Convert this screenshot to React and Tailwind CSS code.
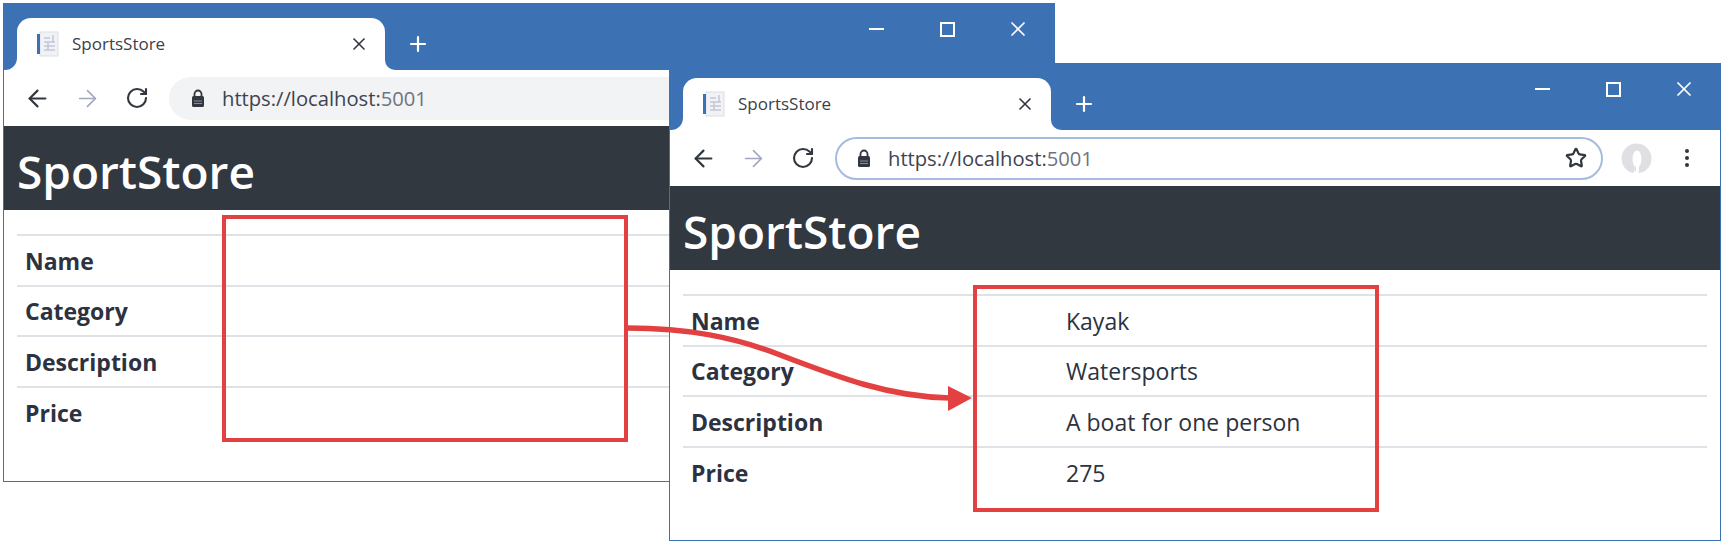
import { ArrowLeft, ArrowRight, RotateCw, Star, X, Plus } from "lucide-react";

const rows = [
  { name: "Name", value: "Kayak" },
  { name: "Category", value: "Watersports" },
  { name: "Description", value: "A boat for one person" },
  { name: "Price", value: "275" },
];

function Favicon() {
  return (
    <svg width="24" height="26" viewBox="0 0 24 26" className="shrink-0">
      <rect x="4" y="1" width="18" height="24" fill="#f1f2f6" stroke="#dcdde6" />
      <rect x="1" y="3" width="3" height="20" fill="#3c72b3" />
      <path d="M8 7h6M8 11h11M8 15h11M8 19h11M12 11v8M17 4v7" stroke="#c3c6d6" strokeWidth="1.5" fill="none" />
    </svg>
  );
}

function LockIcon() {
  return (
    <svg width="14" height="18" viewBox="0 0 14 18" className="shrink-0">
      <path d="M3.5 8V5a3.5 3.5 0 0 1 7 0v3" fill="none" stroke="#32373f" strokeWidth="1.8" />
      <rect x="1" y="7" width="12" height="11" rx="1.5" fill="#32373f" />
      <path d="M3 12h8M3 14.5h8" stroke="#8a8e96" strokeWidth="1" />
    </svg>
  );
}

function Avatar() {
  return (
    <svg width="31" height="31" viewBox="0 0 31 31" className="shrink-0">
      <circle cx="15.500" cy="15.500" r="15" fill="#dfdfe4" />
      <ellipse cx="16" cy="16" rx="4.500" ry="8.500" fill="#ffffff" />
      <path d="M14 22l-1.500 9h5l.5-9z" fill="#ffffff" />
      <path d="M12 26l3-3v6z" fill="#dfdfe4" />
    </svg>
  );
}

function WindowControls() {
  return (
    <div className="flex items-center">
      <div className="w-[15px] h-[2px] bg-white mr-[56px]" />
      <div className="w-[15px] h-[15px] border-2 border-white mr-[51px]" />
      <X size={24} strokeWidth={1.7} color="#ffffff" className="-my-[4px] mr-[24px]" />
    </div>
  );
}

function BrowserWindow({ className, focused, showValues }) {
  return (
    <div className={`absolute flex flex-col border border-[#3c72b3] bg-white ${className}`}>
      {/* tab strip */}
      <div className="flex items-end justify-between h-[66px] bg-[#3c72b3] shrink-0">
        <div className="flex items-center">
          <div className="relative flex items-center h-[52px] w-[368px] ml-[13px] pl-[19px] pr-[16px] bg-white rounded-t-[14px]">
            {/* concave corners at the foot of the tab */}
            <div className="absolute -left-[12px] bottom-0 w-[12px] h-[12px] bg-white">
              <div className="w-full h-full bg-[#3c72b3] rounded-br-[12px]" />
            </div>
            <div className="absolute -right-[10px] bottom-0 w-[10px] h-[10px] bg-white">
              <div className="w-full h-full bg-[#3c72b3] rounded-bl-[10px]" />
            </div>
            <Favicon />
            <span className="ml-[12px] text-[17px] text-[#3a3f4a] font-['Open_Sans',sans-serif]">SportsStore</span>
            <X size={20} strokeWidth={2} color="#32373f" className="ml-auto" />
          </div>
          <Plus size={24} strokeWidth={2.2} color="#ffffff" className="ml-[21px]" />
        </div>
        <div className="self-start mt-[17px]">
          <WindowControls />
        </div>
      </div>

      {/* toolbar */}
      <div className="flex items-center h-[56px] shrink-0 bg-white pl-[20px] pr-[25px]">
        <ArrowLeft size={27} strokeWidth={1.9} color="#32373f" className="shrink-0" />
        <ArrowRight size={27} strokeWidth={1.5} color="#a3a6c0" className="shrink-0 ml-[23px]" />
        <RotateCw size={24} strokeWidth={2.1} color="#32373f" className="shrink-0 ml-[24px]" />
        <div
          className={`flex items-center flex-1 h-[43px] ml-[20px] pr-[14px] rounded-full ${
            focused ? "pl-[20px] border-2 border-[#a5bcdf] bg-white" : "pl-[22px] bg-[#f1f3f4]"
          }`}
        >
          <LockIcon />
          <span className="ml-[17px] text-[20.200px] text-[#3e4350] font-['Open_Sans',sans-serif]">
            https://localhost:<span className="text-[#70747f]">5001</span>
          </span>
          <Star size={22} strokeWidth={2.4} color="#32373f" className="ml-auto" />
        </div>
        <div className="ml-[18px]">
          <Avatar />
        </div>
        <div className="flex flex-col gap-[3px] ml-[33px] mr-[6px]">
          <div className="w-[4px] h-[4px] rounded-full bg-[#32373f]" />
          <div className="w-[4px] h-[4px] rounded-full bg-[#32373f]" />
          <div className="w-[4px] h-[4px] rounded-full bg-[#32373f]" />
        </div>
      </div>

      {/* page */}
      <div className="flex items-center h-[84px] shrink-0 bg-[#32383f] pl-[13px] pt-[5px]">
        <h1 className="text-[46px] leading-none text-white font-['Open_Sans',sans-serif] font-semibold">SportStore</h1>
      </div>
      <div className="mt-[24px] mx-[13px]">
        <table className="w-full table-fixed border-collapse font-['Open_Sans',sans-serif] text-[23px] text-[#2c3240]">
          <tbody>
            {rows.map((row) => (
              <tr key={row.name} className="h-[50.500px] border-t-2 border-[#e1e2e8]">
                <th className="w-[375px] pl-[8px] pt-[1px] text-left font-bold">{row.name}</th>
                <td className="pl-[8px] pt-[1px]">{showValues ? row.value : ""}</td>
              </tr>
            ))}
          </tbody>
        </table>
      </div>
    </div>
  );
}

export default function App() {
  return (
    <div className="relative w-[1725px] h-[546px] bg-white overflow-hidden">
      <BrowserWindow className="left-[3px] top-[3px] w-[1052px] h-[479px]" />
      <BrowserWindow className="left-[669px] top-[63px] w-[1052px] h-[478px]" focused showValues />

      {/* callout boxes and arrow */}
      <div className="absolute left-[222px] top-[215px] w-[406px] h-[227px] border-4 border-[#e34042]" />
      <div className="absolute left-[973px] top-[285px] w-[406px] h-[227px] border-4 border-[#e34042]" />
      <svg className="absolute left-0 top-0" width="1725" height="546" viewBox="0 0 1725 546">
        <path d="M627 328C690 328 735 338 775 353C840 378 890 397 950 398" fill="none" stroke="#e34042" strokeWidth="5.500" />
        <path d="M948 386L972 398L948 411z" fill="#e34042" />
      </svg>
    </div>
  );
}
